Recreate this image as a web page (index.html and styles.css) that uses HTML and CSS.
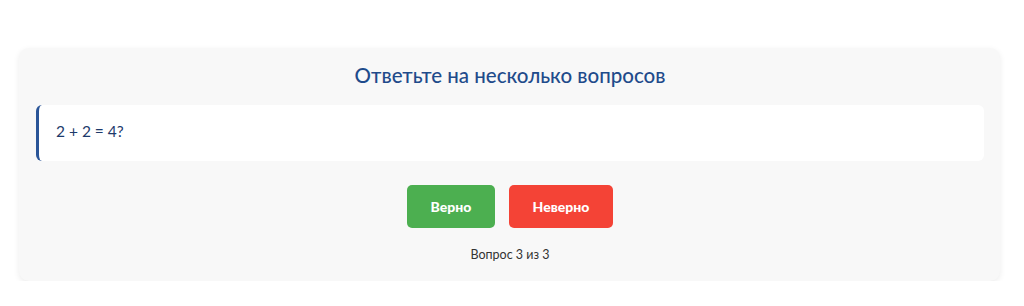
FILE: index.html
```html
<!DOCTYPE html>
<html lang="ru">
    <head>
        <meta charset="UTF-8">
        <title>Опрос</title>
<link rel="stylesheet" href="styles.css">
    </head>
    <body>
        <div class="quiz">
            <h2 class="title">Ответьте на несколько вопросов</h2>
            <div class="question">2 + 2 = 4?</div>
            <div class="answers">
                <button class="btn yes">Верно</button>
                <button class="btn no">Неверно</button>
            </div>
            <p class="progress">Вопрос 3 из 3</p>
        </div>
    </body>
</html>
```

FILE: styles.css
```css
html,body {
    margin: 0;
    background: #fff;
    font-family: "Lato", "Noto Sans", sans-serif;
}
body {
    padding: 48px 24px 0 19px;
}

.quiz {
    background-color: #f8f8f8;
    border-radius: 10px;
    box-shadow: 0 2px 6px rgba(0, 0, 0, 0.08);
    padding: 16px 16px 16px 17px;
    height: 201px;
}
.quiz .title {
    margin: 0 0 19px;
    text-align: center;
    font-size: 20.5px;
    font-weight: 500;
    line-height: 22px;
    color: #1f4b8b;
}
.quiz .question {
    background-color: #fff;
    border-left: 3px solid #2a5598;
    border-radius: 6px;
    padding: 0 17px;
    height: 56px;
    line-height: 53px;
    font-size: 15.5px;
    color: #1d3a6b;
}
.quiz .answers {
    display: flex;
    justify-content: center;
    gap: 14px;
    margin-top: 24px;
}
.btn {
    border: none;
    border-radius: 5px;
    height: 43px;
    color: #fff;
    font-family: inherit;
    font-size: 14px;
    font-weight: 900;
}
.btn.yes {
    background-color: #4caf50;
    width: 88px;
}
.btn.no {
    background-color: #f44336;
    width: 104px;
}
.quiz .progress {
    margin: 19px 0 0;
    text-align: center;
    font-size: 12.5px;
    color: #333;
}
```
